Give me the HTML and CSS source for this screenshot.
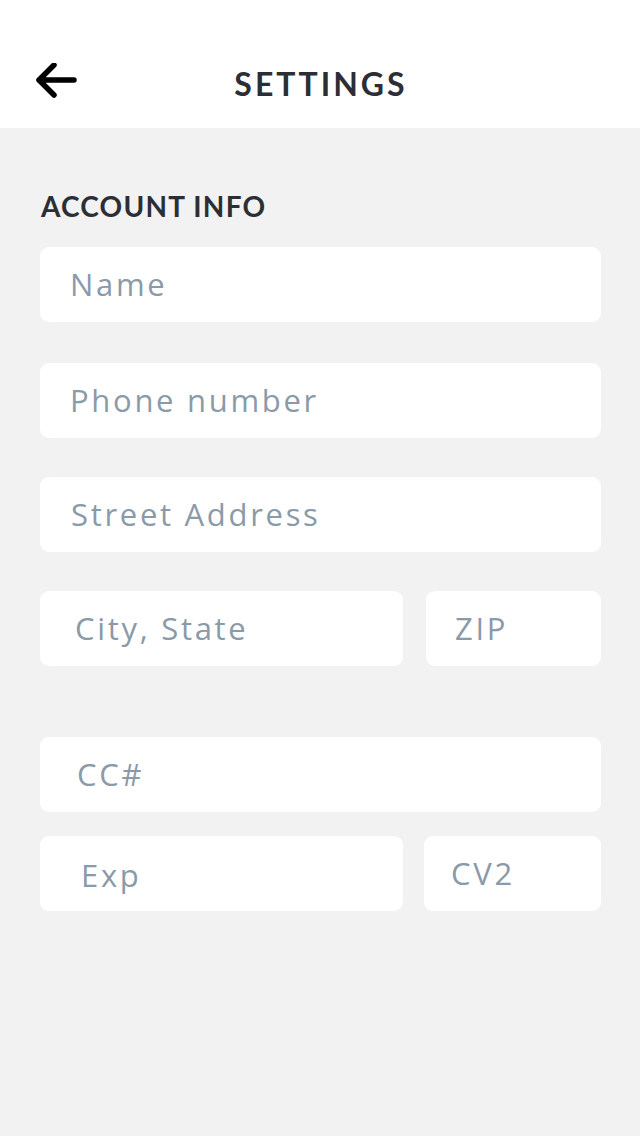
FILE: index.html
```html
<!DOCTYPE html>
<html lang="en">
<head>
<meta charset="utf-8">
<title>Settings</title>
<link rel="stylesheet" href="styles.css">
</head>
<body>
<header class="topbar">
  <button class="back" aria-label="Back">
    <svg width="42" height="36" viewBox="0 0 42 36" aria-hidden="true">
      <path d="M39 17H4 M19 2L4 17L19 32" fill="none" stroke="#000" stroke-width="5.5" stroke-linecap="round" stroke-linejoin="round"/>
    </svg>
  </button>
  <h1 class="title">SETTINGS</h1>
</header>
<main class="content">
  <h2 class="section">ACCOUNT INFO</h2>
  <form class="form">
    <input class="field p-name" placeholder="Name">
    <input class="field p-phone gap-a" placeholder="Phone number">
    <input class="field p-street gap-b" placeholder="Street Address">
    <div class="row row-addr gap-b">
      <input class="field p-city" placeholder="City, State">
      <input class="field p-zip" placeholder="ZIP">
    </div>
    <input class="field p-cc gap-c" placeholder="CC#">
    <div class="row row-card gap-d">
      <input class="field p-exp" placeholder="Exp">
      <input class="field p-cv2" placeholder="CV2">
    </div>
  </form>
</main>
</body>
</html>
```

FILE: styles.css
```css
html, body {
  margin: 0;
  padding: 0;
}
body {
  background: #f2f2f2;
  font-family: Lato, "Open Sans", sans-serif;
  width: 640px;
  min-height: 1136px;
}
.topbar {
  position: relative;
  height: 88px;
  padding-top: 40px;
  background: #fff;
  display: flex;
  align-items: center;
  justify-content: center;
}
.back {
  position: absolute;
  left: 35px;
  top: 63px;
  padding: 0;
  margin: 0;
  border: 0;
  background: none;
  line-height: 0;
}
.title {
  margin: 0 0 0 2px;
  font-size: 32px;
  font-weight: 700;
  letter-spacing: 3px;
  color: #2b2f35;
  line-height: 1;
}
.content {
  padding: 0 39px 0 40px;
}
.section {
  margin: 0;
  padding-top: 62px;
  padding-left: 1px;
  font-size: 28px;
  font-weight: 700;
  letter-spacing: 1.2px;
  color: #2b2f35;
  line-height: 32px;
  height: 57px;
}
.form {
  display: flex;
  flex-direction: column;
}
.field {
  box-sizing: border-box;
  display: block;
  width: 100%;
  height: 75px;
  margin: 0;
  border: 0;
  outline: none;
  border-radius: 9px;
  background: #fff;
  font-family: "Open Sans", Lato, sans-serif;
  font-size: 31px;
  font-weight: 400;
  letter-spacing: 2.7px;
  color: #2b2f35;
  padding: 0 0 2px 0;
}
.field::placeholder {
  color: #8a9aa8;
  opacity: 1;
}
.gap-a { margin-top: 41px; }
.gap-b { margin-top: 39px; }
.gap-c { margin-top: 71px; }
.gap-d { margin-top: 24px; }
.row {
  display: flex;
}
.row-addr { gap: 23px; }
.row-card { gap: 21px; }
.p-city, .p-exp { width: 363px; flex: none; }
.p-zip, .p-cv2 { flex: 1; }
.p-name { padding-left: 30px; }
.p-phone { padding-left: 30px; }
.p-street { padding-left: 31px; }
.p-city { padding-left: 35px; }
.p-zip { padding-left: 29px; }
.p-cc { padding-left: 37px; }
.p-exp { padding-left: 41px; padding-top: 4px; }
.p-cv2 { padding-left: 27px; }
```
